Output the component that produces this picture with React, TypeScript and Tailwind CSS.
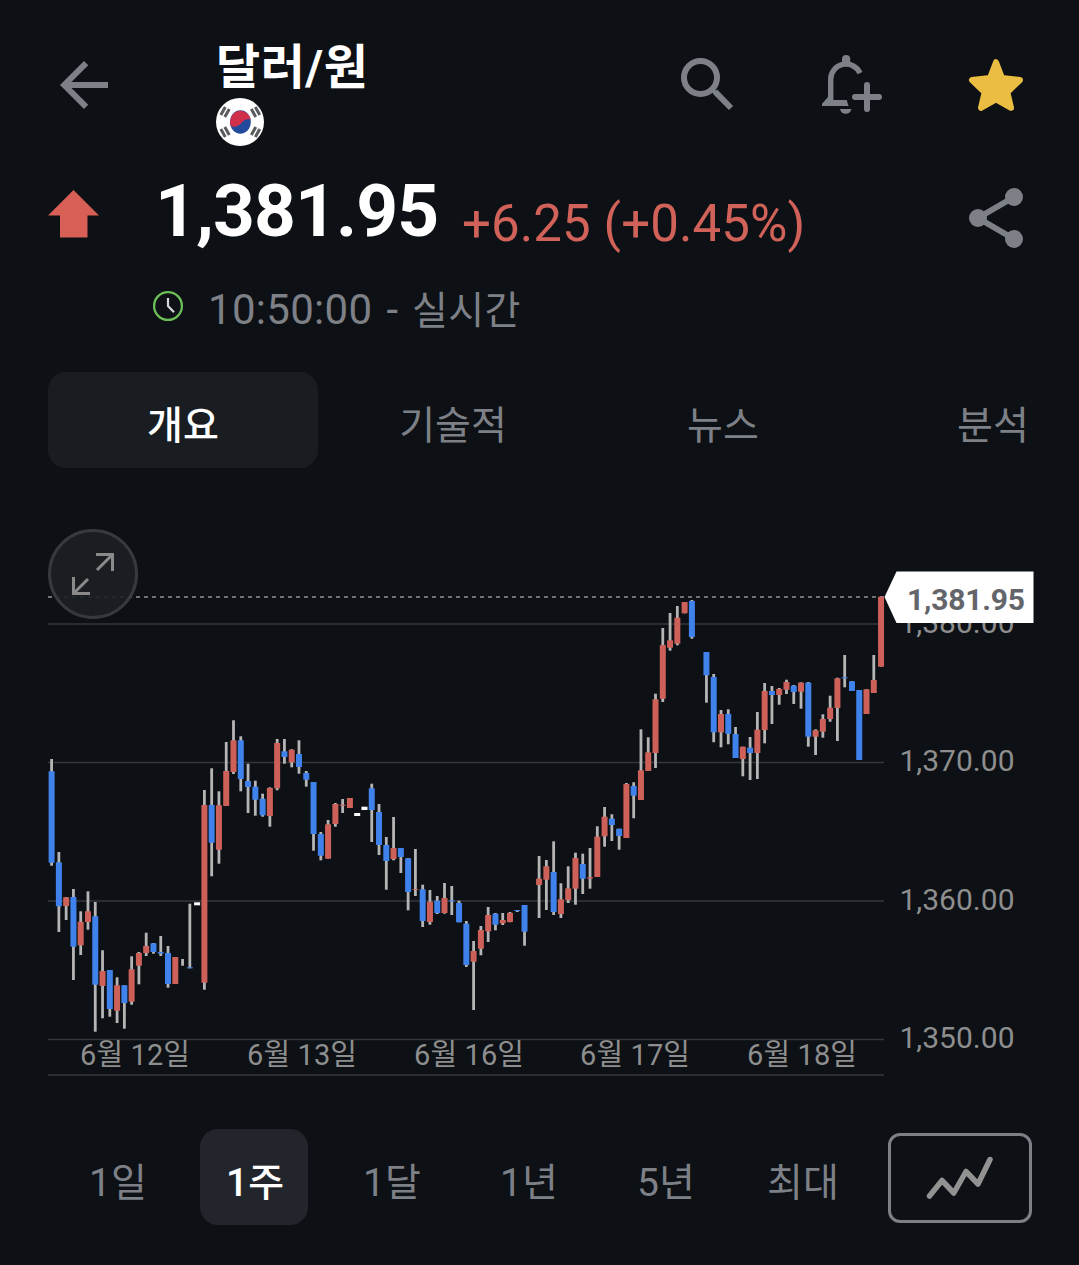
import React, { useState } from "react";

type CandleColor = "up" | "down" | "flat";

// index, high, body top, body bottom, low, colour
type Candle = [number, number, number, number, number, CandleColor];

const candles: Candle[] = [
  [0, 759, 771.3, 862.7, 865.7, "down"],
  [1, 852, 862.3, 906.3, 932, "down"],
  [2, 897, 897.3, 906, 920, "up"],
  [3, 889, 897, 946.7, 980, "down"],
  [4, 911.3, 921.7, 945.3, 955, "up"],
  [5, 891.3, 911.3, 922, 929.7, "up"],
  [6, 902, 916.3, 984.7, 1031.7, "down"],
  [7, 950.3, 971, 986, 1018.3, "up"],
  [8, 970, 970, 1009, 1016.7, "down"],
  [9, 977.3, 985.3, 1010.7, 1023, "up"],
  [10, 985.3, 985.3, 1003, 1028.7, "down"],
  [11, 956.3, 969.3, 1001.7, 1004.7, "up"],
  [12, 952, 953, 965.7, 984.3, "up"],
  [13, 932.7, 946, 953, 956, "up"],
  [14, 943, 943.3, 952, 953.7, "down"],
  [15, 936, 952, 953.5, 956, "down"],
  [16, 946, 953, 984, 987.7, "down"],
  [17, 957, 957, 984, 984, "up"],
  [18, 959, 962, 962, 965.7, "up"],
  [19, 903.7, 967.3, 968.3, 968.3, "down"],
  [20, 902, 902.3, 905.3, 905.3, "flat"],
  [21, 790, 805, 982.7, 989.7, "up"],
  [22, 768.3, 805, 842.7, 876.3, "down"],
  [23, 791.3, 805.3, 849.7, 863.7, "up"],
  [24, 742, 771, 806, 806, "up"],
  [25, 720.3, 740.3, 772, 774, "up"],
  [26, 736.3, 740.3, 779, 791.3, "down"],
  [27, 763.7, 781, 787, 813, "down"],
  [28, 780.7, 786.7, 799.7, 815.7, "down"],
  [29, 793.7, 798.7, 815.3, 816.7, "down"],
  [30, 787.3, 788, 816, 826.7, "up"],
  [31, 739, 743, 788.3, 790.3, "up"],
  [32, 739, 751.3, 757, 763.7, "down"],
  [33, 749.3, 749.7, 762.3, 767.3, "up"],
  [34, 740.3, 754, 767, 773.7, "down"],
  [35, 771, 773, 779.7, 786.7, "down"],
  [36, 782, 782, 834, 850.7, "down"],
  [37, 832, 834, 855.7, 860.3, "down"],
  [38, 820, 824.3, 858.7, 858.7, "up"],
  [39, 803, 804, 824, 826.7, "up"],
  [40, 799, 804.7, 805.7, 813, "up"],
  [41, 798, 798, 808, 808, "up"],
  [42, 813, 813, 816, 816, "flat"],
  [43, 806.7, 806.7, 810, 810, "flat"],
  [44, 783.7, 788.3, 810, 842, "down"],
  [45, 804, 812, 845, 855, "down"],
  [46, 837, 845, 861, 889.7, "down"],
  [47, 817, 848, 859, 860.3, "up"],
  [48, 848, 848, 857, 873, "down"],
  [49, 858, 858.3, 892, 910.3, "down"],
  [50, 849, 889, 889.8, 896, "up"],
  [51, 884.7, 889.3, 921, 927, "down"],
  [52, 890, 901.7, 922, 924.7, "up"],
  [53, 896, 900.7, 913, 914, "down"],
  [54, 883, 898, 913, 913.7, "up"],
  [55, 886, 900.3, 901.3, 915, "down"],
  [56, 900.7, 903, 922.3, 922.3, "down"],
  [57, 921, 923.7, 965, 967, "down"],
  [58, 941, 951, 961.7, 1010, "up"],
  [59, 926, 930, 948.7, 955.3, "up"],
  [60, 907, 915, 931.3, 942, "up"],
  [61, 913, 913.7, 924.7, 930.3, "down"],
  [62, 913, 920, 923.3, 925, "up"],
  [63, 912, 913, 922, 922.3, "up"],
  [64, 910, 910, 911, 912, "down"],
  [65, 905, 905, 931.7, 945.7, "down"],
  [67, 856, 878.7, 885, 918, "up"],
  [68, 860, 866.3, 879.7, 910, "up"],
  [69, 841.3, 872, 912, 915, "down"],
  [70, 883.3, 899.3, 914, 918, "up"],
  [71, 866.3, 888.3, 900, 903, "up"],
  [72, 852.7, 858, 888.7, 904.7, "up"],
  [73, 853.7, 864, 878.7, 894, "down"],
  [74, 848, 877.3, 878.5, 888.7, "up"],
  [75, 826.3, 836.7, 877, 877, "up"],
  [76, 807, 816.7, 836.3, 846.7, "up"],
  [77, 814.3, 818.7, 825, 841, "down"],
  [78, 828.7, 828.7, 836, 849.7, "down"],
  [79, 783, 784, 838, 838, "up"],
  [80, 782.3, 786, 795.7, 818.3, "down"],
  [81, 729.3, 770.3, 800, 800, "up"],
  [82, 737.3, 752.3, 771, 771, "up"],
  [83, 693.7, 699.3, 753, 768, "up"],
  [84, 628, 645, 698.7, 702, "up"],
  [85, 613, 640.3, 647.7, 650.7, "up"],
  [86, 606, 617.7, 643.7, 645.3, "up"],
  [87, 602, 602, 613.3, 613.3, "up"],
  [88, 600, 601, 637, 638.7, "down"],
  [90, 652, 652, 675.3, 702.7, "down"],
  [91, 674, 677, 732.3, 742.3, "down"],
  [92, 710, 714, 732.3, 747.3, "up"],
  [93, 709.3, 714, 733.7, 744.3, "down"],
  [94, 727, 734, 758, 758, "down"],
  [95, 746.7, 746.7, 759, 776.3, "up"],
  [96, 737, 747.7, 753, 780, "down"],
  [97, 712, 729.7, 753, 779, "up"],
  [98, 683, 691, 730, 743.3, "up"],
  [99, 686, 691, 695, 724, "down"],
  [100, 688, 689, 695, 704.7, "up"],
  [101, 679.7, 682, 689.7, 694, "up"],
  [102, 685, 685.7, 692, 704, "down"],
  [103, 682.3, 682.7, 691.7, 708.7, "up"],
  [104, 682, 682.7, 736.7, 746.7, "down"],
  [105, 729.3, 730.3, 736.7, 755, "up"],
  [106, 714.3, 719, 731.7, 737.7, "up"],
  [107, 695.7, 707.7, 719, 721.7, "up"],
  [108, 677.7, 678.3, 708, 741, "up"],
  [109, 655, 677.3, 678.3, 687.3, "down"],
  [110, 681, 681.3, 691, 691, "down"],
  [111, 690, 690, 760, 760, "down"],
  [112, 689.3, 689.3, 714, 714, "up"],
  [113, 655, 680, 693, 693, "up"],
  [114, 596.7, 596.7, 666.7, 666.7, "up"],
];

const candleColors: Record<CandleColor, string> = {
  up: "#cd6159",
  down: "#3f82ec",
  flat: "#ffffff",
};

const gridLines = [624, 762.5, 901, 1039.5, 1075];

const priceLabels = [
  { text: "1,380.00", y: 633 },
  { text: "1,370.00", y: 771 },
  { text: "1,360.00", y: 910 },
  { text: "1,350.00", y: 1048 },
];

const dateLabels = [
  { text: "6월 12일", x: 135 },
  { text: "6월 13일", x: 302 },
  { text: "6월 16일", x: 469 },
  { text: "6월 17일", x: 635 },
  { text: "6월 18일", x: 802 },
];

const tabs = ["개요", "기술적", "뉴스", "분석"];
const periods = ["1일", "1주", "1달", "1년", "5년", "최대"];

const BackIcon = () => (
  <svg viewBox="0 0 24 24" className="w-[72px] h-[72px]" fill="#7d8087">
    <path d="M20 11H7.83l5.59-5.59L12 4l-8 8 8 8 1.41-1.41L7.83 13H20v-2z" />
  </svg>
);

const SearchIcon = () => (
  <svg viewBox="0 0 72 72" className="w-[72px] h-[72px]" fill="none" stroke="#7d8087" strokeWidth="6">
    <circle cx="28.5" cy="29.5" r="16.5" />
    <path d="M43 43.7 59 60" />
    <path d="M39.5 41.2 44 45.2" strokeWidth="4" />
  </svg>
);

const BellPlusIcon = () => (
  <svg viewBox="0 0 72 72" className="w-[72px] h-[72px]" fill="#7d8087">
    <path d="M26 17V11.2a4.1 4.1 0 0 1 8.2 0V17z" />
    <path d="M14.7 53V31.6A15.3 15.3 0 0 1 44 25.2" fill="none" stroke="#7d8087" strokeWidth="5.4" />
    <path d="M6 58v-2.2l6-6.8 4 3h14.7l1.8 6z" />
    <path d="M24 61h11.4a5.8 5.8 0 0 1-11.4 0z" />
    <path d="M39 49h24M51 37v24" stroke="#7d8087" strokeWidth="6" strokeLinecap="round" />
  </svg>
);

const StarIcon = () => (
  <svg viewBox="0 0 72 72" className="w-[72px] h-[72px]">
    <path
      d="M36 14.2 42 30l18 2-12.7 12.3 3.7 15.5-15-8.3-15 8.3 3.7-15.5L12 32l18-2z"
      fill="#ebbd42"
      stroke="#ebbd42"
      strokeWidth="6"
      strokeLinejoin="round"
    />
  </svg>
);

const ShareIcon = () => (
  <svg viewBox="0 0 72 72" className="w-[72px] h-[72px]" fill="#7d8087">
    <path d="M54 15 18 36l36 21" fill="none" stroke="#7d8087" strokeWidth="6" />
    <circle cx="54" cy="15" r="9" />
    <circle cx="18" cy="36" r="9" />
    <circle cx="54" cy="57" r="9" />
  </svg>
);

const KoreaFlag = () => (
  <svg viewBox="0 0 48 48" className="w-12 h-12">
    <circle cx="24" cy="24" r="24" fill="#ffffff" />
    <ellipse cx="24.4" cy="24" rx="10.4" ry="11.7" fill="#234a9c" />
    <path
      d="M14.3 27.2A10.4 11.7 0 1 1 34.7 21.8C32 20.8 28.5 21.5 26 24.3 22.5 29 17.5 30 14.3 27.2z"
      fill="#d0304a"
    />
    <g stroke="#5a5b5f" strokeWidth="3">
      <path d="M4.8 17 9.3 9M8.8 19 13.3 11" />
      <path d="M43.8 17 39.3 9M39.8 19 35.3 11" />
      <path d="M4.8 31 9.3 39M8.8 29 13.3 37" />
      <path d="M43.8 31 39.3 39M39.8 29 35.3 37" />
    </g>
  </svg>
);

const ClockIcon = () => (
  <svg viewBox="0 0 32 32" className="w-8 h-8" fill="none">
    <circle cx="16" cy="16" r="13.9" stroke="#6cbf58" strokeWidth="2.3" />
    <path d="M16 8v8l6 6.3" stroke="#d5d6d8" strokeWidth="2.2" />
  </svg>
);

const PriceChart: React.FC = () => (
  <div className="relative h-[590px]">
    <svg viewBox="0 500 1079 590" className="block w-full h-full">
      {gridLines.map((y) => (
        <line key={y} x1="48" x2="884" y1={y} y2={y} stroke="#33363b" strokeWidth="1.3" />
      ))}
      <line x1="48" x2="884" y1="597" y2="597" stroke="#8f9194" strokeWidth="1.5" strokeDasharray="4 4" />

      {candles.map(([index, high, top, bottom, low, color]) => {
        const x = 51.6 + index * 7.276;
        return (
          <g key={index}>
            {low > high && color !== "flat" && (
              <rect x={x - 1.4} y={high} width="2.8" height={low - high} fill="#b5b5b6" />
            )}
            {bottom > top && (
              <rect x={x - 3} y={top} width="6" height={bottom - top} fill={candleColors[color]} />
            )}
          </g>
        );
      })}

      <g fill="#8e8e8e" fontSize="30" className="font-[Roboto,'Noto_Sans_CJK_KR',sans-serif]">
        {priceLabels.map((label) => (
          <text key={label.text} x="899.5" y={label.y} textLength="115">
            {label.text}
          </text>
        ))}
        {dateLabels.map((label) => (
          <text key={label.text} x={label.x} y="1065" fontSize="29" textAnchor="middle" textLength="110">
            {label.text}
          </text>
        ))}
      </g>

      <path d="M884.5 597 896.5 571.5H1033.5V623H896.5z" fill="#ffffff" />
      <text
        x="907"
        y="610"
        fontSize="30"
        fontWeight="700"
        fill="#63656a"
        textLength="118"
        className="font-[Roboto,sans-serif]"
      >
        1,381.95
      </text>
    </svg>

    <button className="absolute left-12 top-[29px] w-[90px] h-[90px] rounded-full border-3 border-[#36393d] bg-[#1c1f23]/90">
      <svg viewBox="0 0 84 84" className="w-full h-full" fill="none" stroke="#8a8a8a" strokeWidth="3">
        <path d="M45 22.5H61.5V39M61 23 46 38" />
        <path d="M22.5 45V61.5H39M23 61 37 47" />
      </svg>
    </button>
  </div>
);

const App: React.FC = () => {
  const [activeTab, setActiveTab] = useState("개요");
  const [activePeriod, setActivePeriod] = useState("1주");

  return (
    <div className="w-[1079px] h-[1265px] overflow-hidden bg-[#0d1014] text-white font-[Roboto,'Noto_Sans_CJK_KR',sans-serif]">
      <header className="flex h-[160px] pl-12 pr-[47px] pt-9">
        <button className="mt-[13px] h-[72px]">
          <BackIcon />
        </button>
        <div className="flex-1 ml-24">
          <h1 className="h-[62px] text-[48px] leading-[63px] font-bold tracking-[0.5px]">달러/원</h1>
          <KoreaFlag />
        </div>
        <div className="flex gap-[72px] mt-3 h-[72px]">
          <SearchIcon />
          <BellPlusIcon />
          <StarIcon />
        </div>
      </header>

      <section className="flex items-start h-[122px] pl-12 pr-[47px]">
        <svg viewBox="0 0 52 48" className="w-[52px] h-12 mt-[30px]" fill="#d85f55">
          <path d="M25.5 0 51 25.5H39.5V47.5H12V25.5H0z" />
        </svg>
        <div className="flex flex-1 items-start ml-[55px]">
          <span className="w-[282px] text-[73px] leading-[102px] font-bold tracking-[-0.9px]">1,381.95</span>
          <span className="ml-[25px] mt-[31px] text-[51px] leading-[66px] tracking-[0.1px] whitespace-nowrap text-[#d0625a]">
            +6.25 (+0.45%)
          </span>
        </div>
        <div className="mt-[22px]">
          <ShareIcon />
        </div>
      </section>

      <div className="flex items-center h-[48px] pl-[152px] text-[42px] leading-[52px] text-[#7d8087]">
        <ClockIcon />
        <div className="flex items-baseline ml-6 mt-2">
          <span className="tracking-[0.3px]">10:50:00</span>
          <span className="ml-3.5">-</span>
          <span className="ml-3.5 text-[39px] tracking-[0.4px]">실시간</span>
        </div>
      </div>

      <nav className="flex mt-[42px] h-24 ml-12 overflow-hidden">
        {tabs.map((tab) => (
          <button
            key={tab}
            onClick={() => setActiveTab(tab)}
            className={`w-[270px] shrink-0 rounded-[18px] pt-3 text-[39px] ${
              activeTab === tab ? "bg-[#191d21] text-white font-medium" : "text-[#7d8087]"
            }`}
          >
            {tab}
          </button>
        ))}
      </nav>

      <div className="mt-8">
        <PriceChart />
      </div>

      <div className="flex items-center mt-[39px] h-24 pl-[63px] pr-[47px]">
        <div className="flex flex-1 gap-[29px]">
          {periods.map((period) => (
            <button
              key={period}
              onClick={() => setActivePeriod(period)}
              className={`w-[108px] h-24 rounded-[18px] pt-3 pl-0.5 text-[39px] ${
                activePeriod === period ? "bg-[#22262c] text-white font-medium" : "text-[#7d8087]"
              }`}
            >
              {period}
            </button>
          ))}
        </div>
        <button className="w-36 h-[90px] mt-0.5 border-3 border-[#7d8087] rounded-xl">
          <svg viewBox="0 0 138 84" className="w-full h-full" fill="none">
            <path
              d="M38.5 60 51 44.5 62.8 57 75 35.5 87 48 99 23.5"
              stroke="#929292"
              strokeWidth="5.5"
              strokeLinecap="round"
              strokeLinejoin="round"
            />
          </svg>
        </button>
      </div>
    </div>
  );
};

export default App;
